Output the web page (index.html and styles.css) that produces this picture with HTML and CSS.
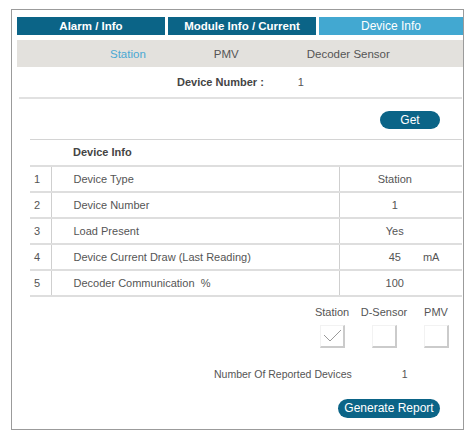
FILE: index.html
```html
<!DOCTYPE html>
<html>
<head>
<meta charset="utf-8">
<link rel="stylesheet" href="styles.css">
</head>
<body>
<div class="panel">
  <div class="tabs">
    <div class="tab dark">Alarm / Info</div>
    <div class="tab dark">Module Info / Current</div>
    <div class="tab active">Device Info</div>
  </div>
  <div class="subnav">
    <span class="sub on">Station</span>
    <span class="sub">PMV</span>
    <span class="sub">Decoder Sensor</span>
  </div>
  <div class="devnum">
    <span class="devlabel">Device Number :</span>
    <span class="devval">1</span>
  </div>
  <div class="sep"></div>
  <div class="getrow"><button class="btn get">Get</button></div>
  <table class="info">
    <tr class="head"><td></td><td class="lbl">Device Info</td><td></td></tr>
    <tr><td class="num">1</td><td class="lbl">Device Type</td><td class="val"><div class="vg"><span></span><span>Station</span><span></span></div></td></tr>
    <tr><td class="num">2</td><td class="lbl">Device Number</td><td class="val"><div class="vg"><span></span><span>1</span><span></span></div></td></tr>
    <tr><td class="num">3</td><td class="lbl">Load Present</td><td class="val"><div class="vg"><span></span><span>Yes</span><span></span></div></td></tr>
    <tr><td class="num">4</td><td class="lbl">Device Current Draw (Last Reading)</td><td class="val"><div class="vg"><span></span><span class="v45">45</span><span class="unit">mA</span></div></td></tr>
    <tr><td class="num">5</td><td class="lbl">Decoder Communication&nbsp; %</td><td class="val"><div class="vg"><span></span><span>100</span><span></span></div></td></tr>
  </table>
  <div class="checks">
    <div class="chk">
      <span class="chklabel">Station</span>
      <span class="box"><svg width="25" height="23" viewBox="0 0 25 23"><polyline points="3,9 9,15 20,4" fill="none" stroke="#9a9a9a" stroke-width="1"/></svg></span>
    </div>
    <div class="chk">
      <span class="chklabel">D-Sensor</span>
      <span class="box"></span>
    </div>
    <div class="chk">
      <span class="chklabel">PMV</span>
      <span class="box"></span>
    </div>
  </div>
  <div class="reported">
    <span class="replabel">Number Of Reported Devices</span>
    <span class="repval">1</span>
  </div>
  <div class="genrow"><button class="btn gen">Generate Report</button></div>
</div>
</body>
</html>
```
FILE: styles.css
```css
* { box-sizing: border-box; }
body {
  margin: 0;
  background: #fff;
  font-family: "Liberation Sans", Arial, sans-serif;
  color: #555;
  font-size: 11px;
}
.panel {
  margin: 9px 0 0 11px;
  width: 453px;
  height: 421px;
  border: 1px solid #9b9b9b;
  padding: 7px 0 0 5px;
}
.tabs {
  display: flex;
  gap: 3px;
  height: 18px;
}
.tab {
  color: #fff;
  font-size: 12px;
  line-height: 18px;
  text-align: center;
}
.tab.dark {
  width: 148px;
  background: #0b6487;
  font-weight: bold;
  font-size: 11.5px;
}
.tab.active {
  width: 144px;
  background: #42a8d1;
}
.subnav {
  margin-top: 5px;
  height: 27px;
  background: #e3e1dd;
  display: flex;
  align-items: center;
  gap: 68px;
  padding-left: 93px;
  font-size: 11.5px;
  color: #555;
}
.sub.on { color: #4aa8d3; }
.devnum {
  height: 30px;
  display: flex;
  align-items: center;
  padding-left: 160px;
  gap: 34px;
}
.devlabel { font-weight: bold; color: #444; }
.devval { color: #555; }
.sep {
  margin-left: 2px;
  width: 443px;
  height: 2px;
  background: #e1e1e1;
}
.getrow {
  display: flex;
  justify-content: flex-end;
  padding-right: 23px;
  margin-top: 12px;
}
.btn {
  border: none;
  background: #0b6487;
  color: #fff;
  font-family: "Liberation Sans", Arial, sans-serif;
  font-size: 12px;
  border-radius: 10px;
  padding: 0;
  height: 18px;
  line-height: 18px;
}
.btn.get { width: 60px; }
.btn.gen { width: 102px; height: 19px; font-size: 12px; }
.info {
  margin: 10px 0 0 13px;
  width: 432px;
  border-collapse: collapse;
  border-top: 1px solid #d4d4d4;
}
.info td {
  height: 26px;
  padding: 0;
  border-bottom: 2px solid #dedede;
  color: #555;
  font-size: 11px;
}
.info tr:not(.head) td.num,
.info tr:not(.head) td.lbl {
  border-right: 1px solid #cfcfcf;
}
.info td.num { width: 21px; padding-left: 4px; }
.info td.lbl { width: 288px; padding-left: 22px; }
.head td.lbl { color: #444; font-weight: 600; }
.info td.val { width: 123px; }
.vg {
  display: grid;
  grid-template-columns: 1fr auto 1fr;
  align-items: center;
  padding-right: 12px;
}
.unit { padding-left: 22px; }
.checks {
  margin-top: 9px;
  display: flex;
  justify-content: flex-end;
  padding-right: 1px;
}
.chk {
  width: 52px;
  display: flex;
  flex-direction: column;
  align-items: center;
}
.chklabel { line-height: 12px; color: #555; }
.box {
  margin-top: 7px;
  width: 25px;
  height: 23px;
  border-right: 2px solid #cbcbcb;
  border-bottom: 2px solid #cbcbcb;
  border-left: 1px solid #f2f2f2;
  border-top: 1px solid #f2f2f2;
  display: block;
}
.box svg { display: block; }
.reported {
  margin-top: 20px;
  display: flex;
  padding-left: 197px;
  gap: 50px;
  line-height: 12px;
  font-size: 10.5px;
}
.genrow {
  margin-top: 19px;
  display: flex;
  justify-content: flex-end;
  padding-right: 23px;
}
```
